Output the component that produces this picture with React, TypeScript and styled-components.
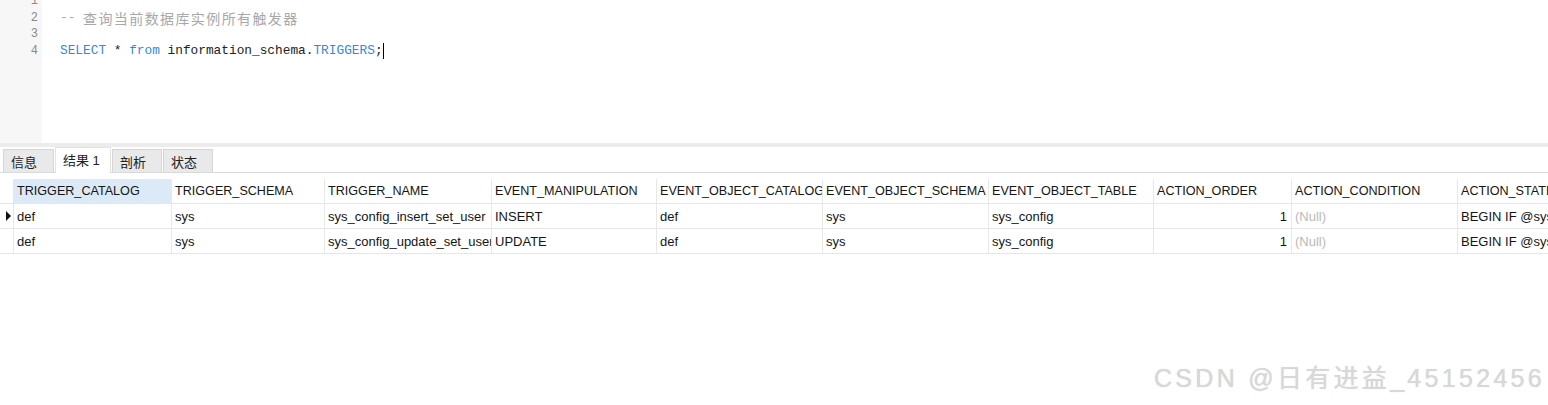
import React from 'react';
import styled, { createGlobalStyle } from 'styled-components';

const GlobalStyle = createGlobalStyle`
	body {
		margin: 0;
		background: #ffffff;
		font-family: "Liberation Sans", "Noto Sans CJK SC", sans-serif;
	}
`

const Page = styled.div`
	position: relative;
	width: 1548px;
	height: 405px;
	overflow: hidden;
	background: #ffffff;
`

const Editor = styled.div`
	display: flex;
	height: 143px;
	overflow: hidden;
`

const Gutter = styled.div`
	width: 42px;
	background: #f7f7f7;
	box-sizing: border-box;
`

const LineNo = styled.div`
	height: 16.5px;
	line-height: 16.5px;
	padding-right: 4px;
	text-align: right;
	font-family: "Liberation Mono", monospace;
	font-size: 12px;
	color: #8a8a8a;
	&:first-child { margin-top: -7px; }
`

const Code = styled.div`
	flex: 1;
	padding-left: 18px;
	font-family: "Liberation Mono", "Noto Sans CJK SC", monospace;
	font-size: 12.8px;
	color: #222;
`

const CodeLine = styled.div`
	height: 16.5px;
	line-height: 16.5px;
	white-space: pre;
	display: flex;
	align-items: center;
	&:first-child { margin-top: -7px; }
`

const Comment = styled.span`
	color: #a8a8a8;
`

const CommentCjk = styled.span`
	font-family: "Noto Sans CJK SC", sans-serif;
	font-size: 14px;
	letter-spacing: 1.4px;
	color: #a8a8a8;
`

const Keyword = styled.span`
	color: #2f8ae0;
`

const Caret = styled.span`
	display: inline-block;
	width: 1px;
	height: 16px;
	background: #000;
`

const Splitter = styled.div`
	height: 4px;
	background: #ececec;
`

const TabBar = styled.div`
	display: flex;
	align-items: flex-end;
	gap: 1px;
	height: 26px;
	padding-left: 3px;
	border-bottom: 1px solid #dadada;
	box-sizing: border-box;
`

const Tab = styled.div<{ $active?: boolean; $width: number }>`
	height: ${p => (p.$active ? '26px' : '23px')};
	width: ${p => p.$width}px;
	box-sizing: border-box;
	border: 1px solid ${p => (p.$active ? '#e2e2e2' : '#d6d6d6')};
	border-bottom: none;
	background: ${p => (p.$active ? '#ffffff' : '#e9e9e9')};
	display: flex;
	align-items: center;
	padding-left: 7px;
	padding-bottom: ${p => (p.$active ? '3px' : '0')};
	font-family: "Liberation Sans", "Noto Sans CJK SC", sans-serif;
	font-size: 13px;
	color: #222;
	margin-bottom: ${p => (p.$active ? '-1px' : '0')};
`

const Grid = styled.div`
	margin-top: 6px;
`

const Row = styled.div`
	display: grid;
	grid-template-columns: 14px 158px 153px 167px 165px 166px 166px 165px 138px 166px 200px;
`

const Cell = styled.div<{ $head?: boolean; $selected?: boolean; $right?: boolean; $null?: boolean }>`
	height: 25px;
	box-sizing: border-box;
	padding: 0 4px 0 3px;
	display: flex;
	align-items: center;
	justify-content: ${p => (p.$right ? 'flex-end' : 'flex-start')};
	overflow: hidden;
	white-space: nowrap;
	border-right: 1px solid #e8e8e8;
	border-bottom: 1px solid #e6e6e6;
	background: ${p => (p.$selected ? '#dceaf8' : '#ffffff')};
	font-size: ${p => (p.$head ? '12.6px' : '13px')};
	color: ${p => (p.$null ? '#b9b9b9' : '#151515')};
`

const Indicator = styled.div<{ $current?: boolean }>`
	height: 25px;
	box-sizing: border-box;
	border-bottom: 1px solid #e6e6e6;
	border-right: 1px solid #e8e8e8;
	display: flex;
	align-items: center;
	padding-left: 6px;
	&::before {
		content: '';
		display: ${p => (p.$current ? 'block' : 'none')};
		border-left: 5px solid #111;
		border-top: 5px solid transparent;
		border-bottom: 5px solid transparent;
	}
`

const Watermark = styled.div`
	position: absolute;
	right: 3px;
	bottom: 11px;
	font-family: "Liberation Sans", "Noto Sans CJK SC", sans-serif;
	font-size: 25px;
	letter-spacing: 3.3px;
	color: #d8d8d8;
	text-shadow: 0 0 1px #d0d0d0;
	white-space: nowrap;
`

const columns = [
	'TRIGGER_CATALOG', 'TRIGGER_SCHEMA', 'TRIGGER_NAME', 'EVENT_MANIPULATION',
	'EVENT_OBJECT_CATALOG', 'EVENT_OBJECT_SCHEMA', 'EVENT_OBJECT_TABLE',
	'ACTION_ORDER', 'ACTION_CONDITION', 'ACTION_STATEMENT',
]

const rows = [
	['def', 'sys', 'sys_config_insert_set_user', 'INSERT', 'def', 'sys', 'sys_config', '1', null, 'BEGIN IF @sys'],
	['def', 'sys', 'sys_config_update_set_user', 'UPDATE', 'def', 'sys', 'sys_config', '1', null, 'BEGIN IF @sys'],
]

const tabs = [
	{ label: '信息', width: 51 },
	{ label: '结果 1', width: 56, active: true },
	{ label: '剖析', width: 50 },
	{ label: '状态', width: 50 },
]

export default function App() {
	return (
		<Page>
			<GlobalStyle />
			<Editor>
				<Gutter>
					{[1, 2, 3, 4].map(n => <LineNo key={n}>{n}</LineNo>)}
				</Gutter>
				<Code>
					<CodeLine> </CodeLine>
					<CodeLine>
						<Comment>-- </Comment><CommentCjk>查询当前数据库实例所有触发器</CommentCjk>
					</CodeLine>
					<CodeLine> </CodeLine>
					<CodeLine>
						<Keyword>SELECT</Keyword> * <Keyword>from</Keyword> information_schema.<Keyword>TRIGGERS</Keyword>;<Caret />
					</CodeLine>
				</Code>
			</Editor>
			<Splitter />
			<TabBar>
				{tabs.map(t => (
					<Tab key={t.label} $active={t.active} $width={t.width}>{t.label}</Tab>
				))}
			</TabBar>
			<Grid>
				<Row>
					<Indicator />
					{columns.map((c, i) => (
						<Cell key={c} $head $selected={i === 0}>{c}</Cell>
					))}
				</Row>
				{rows.map((r, ri) => (
					<Row key={ri}>
						<Indicator $current={ri === 0} />
						{r.map((v, ci) => (
							<Cell key={ci} $right={ci === 7} $null={v === null}>{v === null ? '(Null)' : v}</Cell>
						))}
					</Row>
				))}
			</Grid>
			<Watermark>CSDN @日有进益_45152456</Watermark>
		</Page>
	)
}
